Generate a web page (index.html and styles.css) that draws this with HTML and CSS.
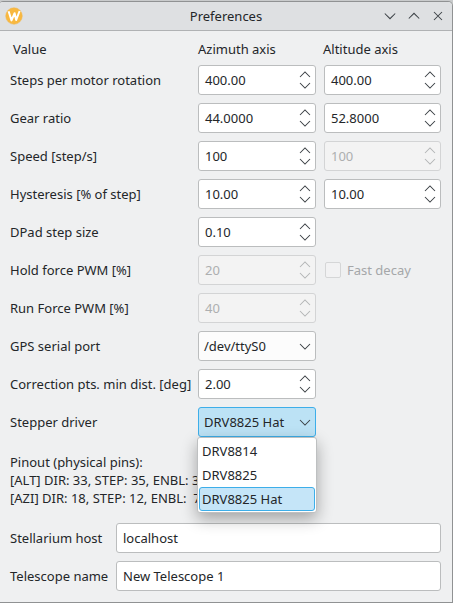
FILE: index.html
```html
<!DOCTYPE html>
<html lang="en">
<head>
<meta charset="utf-8">
<title>Preferences</title>
<link rel="stylesheet" href="styles.css">
</head>
<body>
<svg class="defs" width="0" height="0">
  <symbol id="spin" viewBox="0 0 12 18"><path d="M1 6 6 1 11 6M1 12 6 17 11 12"/></symbol>
  <symbol id="down" viewBox="0 0 12 7"><path d="M1 1 6 6 11 1"/></symbol>
</svg>
<div class="window">
  <header class="titlebar">
    <svg class="logo" width="18" height="18" viewBox="0 0 18 18"><circle cx="9" cy="9" r="8.3"/><path d="M3.6 4.2 6.5 13.4 9.6 6.2 11.2 13 14.6 4"/></svg>
    <h1>Preferences</h1>
    <div class="controls">
      <svg width="12" height="10" viewBox="0 0 12 10"><path d="M.8 2.5 6 7.7 11.2 2.5"/></svg>
      <svg width="12" height="10" viewBox="0 0 12 10"><path d="M.8 7.5 6 2.3 11.2 7.5"/></svg>
      <svg width="12" height="10" viewBox="0 0 12 10"><path d="M2 1 10 9M10 1 2 9"/></svg>
    </div>
  </header>
  <main>
    <div class="settings">
      <span class="head first">Value</span><span class="head">Azimuth axis</span><span class="head last">Altitude axis</span>
      <label>Steps per motor rotation</label>
      <div class="field">400.00<svg class="spin"><use href="#spin"/></svg></div>
      <div class="field">400.00<svg class="spin"><use href="#spin"/></svg></div>
      <label>Gear ratio</label>
      <div class="field">44.0000<svg class="spin"><use href="#spin"/></svg></div>
      <div class="field">52.8000<svg class="spin"><use href="#spin"/></svg></div>
      <label>Speed [step/s]</label>
      <div class="field">100<svg class="spin"><use href="#spin"/></svg></div>
      <div class="field disabled">100<svg class="spin"><use href="#spin"/></svg></div>
      <label>Hysteresis [% of step]</label>
      <div class="field">10.00<svg class="spin"><use href="#spin"/></svg></div>
      <div class="field">10.00<svg class="spin"><use href="#spin"/></svg></div>
      <label>DPad step size</label>
      <div class="field">0.10<svg class="spin"><use href="#spin"/></svg></div>
      <span></span>
      <label>Hold force PWM [%]</label>
      <div class="field disabled">20<svg class="spin"><use href="#spin"/></svg></div>
      <div class="check"><span class="box"></span>Fast decay</div>
      <label>Run Force PWM [%]</label>
      <div class="field disabled">40<svg class="spin"><use href="#spin"/></svg></div>
      <span></span>
      <label>GPS serial port</label>
      <div class="field combo">/dev/ttyS0<svg class="down"><use href="#down"/></svg></div>
      <span></span>
      <label>Correction pts. min dist. [deg]</label>
      <div class="field">2.00<svg class="spin"><use href="#spin"/></svg></div>
      <span></span>
      <label>Stepper driver</label>
      <div class="field combo open">DRV8825 Hat<svg class="down"><use href="#down"/></svg>
        <div class="menu">
          <div class="item">DRV8814</div>
          <div class="item">DRV8825</div>
          <div class="item selected">DRV8825 Hat</div>
        </div>
      </div>
      <span></span>
    </div>
    <div class="pinout">Pinout (physical pins):
[ALT] DIR: 33, STEP: 35, ENBL: 3
[AZI] DIR: 18, STEP: 12, ENBL:  7</div>
    <div class="network">
      <label>Stellarium host</label><div class="field">localhost</div>
      <label>Telescope name</label><div class="field">New Telescope 1</div>
    </div>
  </main>
</div>
</body>
</html>
```
FILE: styles.css
```css
* { box-sizing: border-box; }

body {
  margin: 0;
  height: 603px;
  overflow: hidden;
  padding-top: 1px;
  background: #c9cbcc;
  color: #232629;
  font: 13px/18px "Noto Sans", sans-serif;
}

.defs { position: absolute; }

svg {
  fill: none;
  stroke: #3b4045;
  stroke-width: 1.05;
  flex: none;
}

.window {
  height: 602px;
  border: 1px solid #909293;
  border-left: 0;
  border-radius: 3px 5px 0 0;
  background: #eff0f1;
  overflow: hidden;
}

.titlebar {
  display: grid;
  grid-template-columns: 80px 1fr 80px;
  align-items: center;
  height: 29px;
  background: #dee0e2;
  border-bottom: 1px solid #b0b2b4;
}

.titlebar h1 {
  margin: 0;
  font: inherit;
  text-align: center;
}

.logo { margin-left: 5px; }
.logo circle { fill: #f8b83f; stroke: #eeb95b; stroke-width: .5; }
.logo path { stroke: #fff; stroke-width: 2; stroke-linejoin: round; }

.controls {
  display: flex;
  gap: 12px;
  justify-content: flex-end;
  padding-right: 8px;
}

main { padding: 6px 11px 0 10px; }

.settings {
  display: grid;
  grid-template-columns: 180px 118px 117px;
  grid-template-rows: 20px;
  grid-auto-rows: 30px;
  gap: 8px;
  align-items: center;
}

.head { padding-top: 4px; }
.head.first { padding-left: 3px; }
.head.last { margin-left: -1px; }

label { white-space: nowrap; }

.field {
  display: flex;
  align-items: center;
  justify-content: space-between;
  height: 30px;
  padding: 0 4px 0 6px;
  border: 1px solid #bbbdbe;
  border-radius: 3px;
  background: #fff;
}

.combo {
  position: relative;
  padding-left: 5px;
  background: #fcfcfc;
}

.spin { width: 12px; height: 18px; }
.down { width: 12px; height: 7px; }

.disabled {
  color: #adafb0;
  border-color: #d3d4d5;
  background: #f3f3f3;
}
.disabled svg { stroke: #b3b5b6; }

.check {
  display: flex;
  align-items: center;
  gap: 6px;
  padding-left: 1px;
  color: #a5a7a9;
}

.box {
  width: 16px;
  height: 16px;
  border: 1px solid #d5d6d7;
  border-radius: 2px;
  background: #f2f2f3;
}

.open {
  border-color: #3daee9;
  background: #bce2f5;
}

.menu {
  position: absolute;
  z-index: 1;
  top: 29px;
  left: -2px;
  width: 120px;
  padding: 1px;
  border: 1px solid #bec0c1;
  border-radius: 3px;
  background: #fff;
  box-shadow: 0 6px 16px rgba(0, 0, 0, .32);
}

.item {
  height: 24px;
  padding: 2px;
  border: 1px solid transparent;
  border-radius: 3px;
}

.selected {
  border-color: #3daee9;
  background: #c5e5f8;
}

.pinout {
  margin-top: 16px;
  white-space: pre;
}

.network {
  display: grid;
  grid-template-columns: 98px 1fr;
  gap: 8px;
  align-items: center;
  margin-top: 16px;
}
```
